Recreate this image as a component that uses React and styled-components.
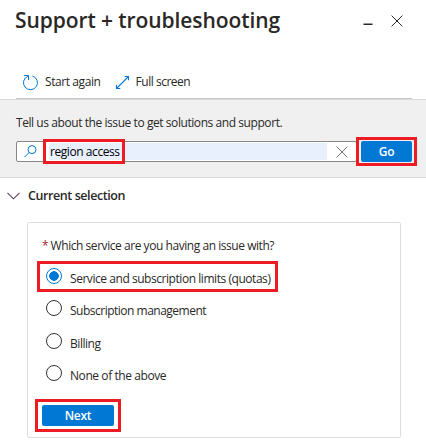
import React from "react";
import styled, { createGlobalStyle } from "styled-components";

const Global = createGlobalStyle`
  * { box-sizing: border-box; }
  body { margin: 0; background: #fff; color: #292827; font: 12px/18px "Open Sans", "Noto Sans", sans-serif; }
  button, input { font: inherit; color: inherit; }
  svg { display: block; flex: none; }
`;

const Blade = styled.main`
  width: 426px;
  height: 447px;
  overflow: hidden;
  display: flex;
  flex-direction: column;
`;
const Text = styled.span`
  display: block;
  white-space: nowrap;
  letter-spacing: ${(p) => p.$track || 0}px;
`;
const Header = styled.header`
  display: flex;
  justify-content: space-between;
  height: 65px;
  padding: 5px 23px 0 15px;
`;
const Title = styled.h1`
  margin: 0;
  font-size: 21px;
  font-weight: 600;
  line-height: 31px;
  letter-spacing: -0.08px;
  white-space: nowrap;
`;
const WindowActions = styled.div`
  display: flex;
  gap: 18px;
  padding-top: 9px;
`;
const IconButton = styled.button`
  border: 0;
  padding: 0;
  background: none;
  height: 13px;
`;
const Toolbar = styled.nav`
  display: flex;
  align-items: flex-start;
  gap: 14px;
  height: 34px;
  margin: 0 14px 0 16px;
  padding: 8px 0 0 6px;
  border-bottom: 1px solid #c8c6c4;
`;
const Command = styled.button`
  display: flex;
  align-items: center;
  gap: 6px;
  border: 0;
  padding: 0;
  background: none;
`;
const SearchPanel = styled.section`
  height: 79px;
  border: solid #dadada;
  border-width: 1px 0;
  background: #f0f0f0;
  padding: 14px 14px 0 16px;
`;
const SearchRow = styled.form`
  display: flex;
  gap: 4px;
  margin-top: 9px;
`;
const SearchBox = styled.div`
  display: flex;
  align-items: center;
  width: 341px;
  height: 21px;
  border: 1px solid #8a8886;
  border-radius: 2px;
  background: #fff;
  padding-left: 7px;
`;
const SearchInput = styled.input`
  width: 278px;
  height: 17px;
  margin: 0 9px 0 12px;
  padding: 0 1px;
  border: 0;
  background: #e8f0fe;
  color: #000;
  letter-spacing: -0.43px;
`;
const PrimaryButton = styled.button`
  width: ${(p) => p.$width}px;
  height: 21px;
  border: 0;
  border-radius: 2px;
  padding: 0;
  background: #0078d4;
  color: #fff;
  font-weight: 600;
  line-height: 20px;
  letter-spacing: -0.3px;
`;
const SectionHeading = styled.h2`
  display: flex;
  align-items: center;
  gap: 8px;
  margin: 0;
  height: 44px;
  padding: 0 0 8px 7px;
  font-size: 12.5px;
  font-weight: 600;
`;
const Card = styled.section`
  width: 374px;
  height: 216px;
  margin-left: 27px;
  border: 1px solid #dedede;
  border-radius: 2px;
  padding: 14px 14px 0;
`;
const Question = styled.div`
  display: flex;
  gap: 2px;
  height: 24px;
`;
const Required = styled.span`
  color: #a4262c;
`;
const Options = styled.div`
  display: grid;
  grid-template-rows: repeat(4, 32.3px);
`;
const Option = styled.label`
  display: flex;
  align-items: flex-start;
  gap: 8px;
  padding: 7px 0 0 4px;
`;
const Radio = styled.input`
  appearance: none;
  flex: none;
  width: 16px;
  height: 16px;
  margin: 0;
  border: 1px solid #323130;
  border-radius: 50%;
  &:checked {
    border-color: #0078d4;
    background: radial-gradient(circle, #0078d4 4.5px, transparent 5px);
  }
`;
const OptionText = styled(Text)`
  padding-top: 2px;
`;
const CardFooter = styled.footer`
  padding-top: 15px;
`;
/* Callout frame drawn over the control it surrounds */
const Marked = styled.div`
  position: relative;
  display: ${(p) => (p.$inline ? "inline-flex" : "block")};
  &::after {
    content: "";
    position: absolute;
    inset: ${(p) => p.$inset};
    border: 3px solid #ed1c24;
    pointer-events: none;
  }
`;

const Close = ({ size, color }) => (
  <svg width={size} height={size} viewBox="0 0 12 12" stroke={color} fill="none">
    <path d="M.6.6 11.4 11.4M11.4.6.6 11.4" />
  </svg>
);
const Minimize = () => (
  <svg width="10" height="12" viewBox="0 0 10 12">
    <path d="M.5 8.5h9v1.5h-9z" fill="#292827" />
  </svg>
);
const Restart = () => (
  <svg width="17" height="17" viewBox="0 0 17 17" fill="none" stroke="#0078d4">
    <path d="M10.5 2A7 7 0 1 1 5.9 2.2" />
    <path d="M2 1.5h4.5v4.5" />
  </svg>
);
const Expand = () => (
  <svg width="15" height="15" viewBox="0 0 15 15" fill="none" stroke="#0078d4" strokeWidth="1.1">
    <path d="M1.5 13.5 13.5 1.5M9.7 1.5h3.8v3.8M1.5 9.7v3.8h3.8" />
  </svg>
);
const Magnifier = () => (
  <svg width="13" height="13" viewBox="0 0 13 13" fill="none" stroke="#0078d4">
    <circle cx="8" cy="4.6" r="4" />
    <path d="M5.1 7.5.5 12.1" />
  </svg>
);
const Chevron = () => (
  <svg width="13" height="8" viewBox="0 0 13 8" fill="none" stroke="#59405c" strokeWidth="1.1">
    <path d="m.5.8 6 6 6-6" />
  </svg>
);

const services = [
  { label: "Service and subscription limits (quotas)", track: -0.45, marked: true },
  { label: "Subscription management", track: -0.5 },
  { label: "Billing", track: -0.45 },
  { label: "None of the above", track: -0.42 },
];

export default function App() {
  return (
    <Blade>
      <Global />
      <Header>
        <Title>Support + troubleshooting</Title>
        <WindowActions>
          <IconButton aria-label="Minimize"><Minimize /></IconButton>
          <IconButton aria-label="Close"><Close size={12} color="#292827" /></IconButton>
        </WindowActions>
      </Header>
      <Toolbar>
        <Command><Restart /><Text $track={-0.41}>Start again</Text></Command>
        <Command><Expand /><Text $track={-0.48}>Full screen</Text></Command>
      </Toolbar>
      <SearchPanel>
        <Text $track={-0.43}>Tell us about the issue to get solutions and support.</Text>
        <SearchRow>
          <SearchBox>
            <Magnifier />
            <Marked $inline $inset="-4px 211px -4px 6px">
              <SearchInput defaultValue="region access" aria-label="Issue" />
            </Marked>
            <IconButton type="button" aria-label="Clear"><Close size={12} color="#777" /></IconButton>
          </SearchBox>
          <Marked $inset="-4px -5px">
            <PrimaryButton type="button" $width={51}>Go</PrimaryButton>
          </Marked>
        </SearchRow>
      </SearchPanel>
      <SectionHeading><Chevron /><Text $track={-0.42}>Current selection</Text></SectionHeading>
      <Card>
        <Question>
          <Required>*</Required>
          <Text $track={-0.45}>Which service are you having an issue with?</Text>
        </Question>
        <Options>
          {services.map((s) => {
            const option = (
              <Option key={s.label}>
                <Radio type="radio" name="service" defaultChecked={s.marked} />
                <OptionText $track={s.track}>{s.label}</OptionText>
              </Option>
            );
            return s.marked ? <Marked key={s.label} $inset="0 108px 1px -5px">{option}</Marked> : option;
          })}
        </Options>
        <CardFooter>
          <Marked $inline $inset="-6px -7px">
            <PrimaryButton type="button" $width={72}>Next</PrimaryButton>
          </Marked>
        </CardFooter>
      </Card>
    </Blade>
  );
}
